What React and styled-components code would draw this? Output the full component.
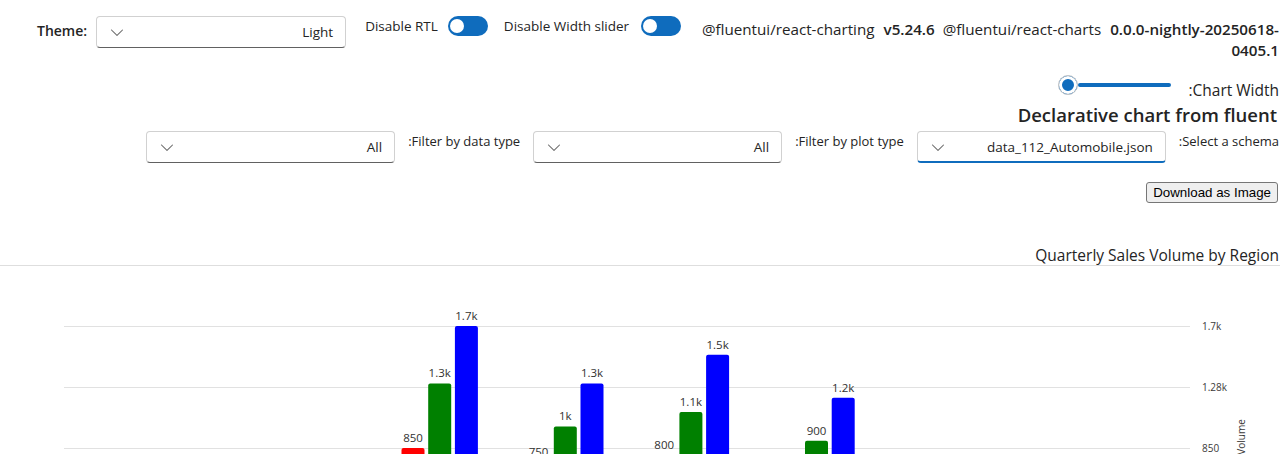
import React from "react";
import styled, { createGlobalStyle } from "styled-components";

const GlobalStyle = createGlobalStyle`
  body {
    margin: 0;
    background: #ffffff;
    color: #242424;
    font-family: "Segoe UI", "Open Sans", sans-serif;
    font-size: 13.5px;
  }
`;

const Page = styled.div`
  display: flex;
  flex-direction: column;
`;

const TopBar = styled.div`
  display: flex;
  align-items: flex-start;
  padding: 16px 1px 0 37px;
`;

const ThemeLabel = styled.label`
  font-weight: 600;
  font-size: 14px;
  line-height: 30px;
  margin-right: 9px;
`;

const DropBox = styled.div`
  box-sizing: border-box;
  width: ${(p) => p.$width || 250}px;
  height: 32px;
  flex: none;
  display: flex;
  align-items: center;
  justify-content: space-between;
  padding: 0 12px 0 10px;
  border: 1px solid #d1d1d1;
  border-bottom: ${(p) => (p.$focused ? "2px solid #0f6cbd" : "1px solid #616161")};
  border-radius: 4px;
  background: #ffffff;
  font-size: 13.5px;
  color: #242424;
`;

const Chevron = () => (
  <svg width="20" height="20" viewBox="0 0 20 20">
    <path
      fill="#616161"
      d="M15.85 7.65a.5.5 0 0 1 0 .7l-5.5 5.5a.5.5 0 0 1-.7 0l-5.5-5.5a.5.5 0 1 1 .7-.7L10 12.79l5.15-5.14a.5.5 0 0 1 .7 0Z"
    />
  </svg>
);

const Dropdown = ({ value, width, focused }) => (
  <DropBox $width={width} $focused={focused}>
    <Chevron />
    <span>{value}</span>
  </DropBox>
);

const SwitchGroup = styled.div`
  display: flex;
  align-items: center;
  margin-left: ${(p) => p.$gap || 19}px;
  height: 20px;
`;

const SwitchLabel = styled.span`
  font-size: 13.5px;
  line-height: 20px;
  margin-right: ${(p) => p.$gap || 10}px;
`;

const Track = styled.span`
  box-sizing: border-box;
  width: 40px;
  height: 20px;
  border-radius: 10px;
  background: #0f6cbd;
  display: flex;
  align-items: center;
  padding-left: 2px;
`;

const Knob = styled.span`
  width: 14px;
  height: 14px;
  border-radius: 50%;
  background: #ffffff;
`;

const Switch = () => (
  <Track>
    <Knob />
  </Track>
);

const Versions = styled.div`
  flex: 1;
  margin-left: 17px;
  padding-top: 3px;
  text-align: right;
  font-size: 15.2px;
  line-height: 21px;
  white-space: nowrap;
`;

const Pkg = styled.span`
  margin-left: ${(p) => (p.$first ? 0 : 8)}px;
`;

const Ver = styled.b`
  font-weight: 600;
  margin-left: 9px;
`;

const RightRow = styled.div`
  display: flex;
  justify-content: flex-end;
  align-items: flex-start;
  gap: ${(p) => p.$gap || 13}px;
  padding-right: 1px;
  margin-top: ${(p) => p.$top || 0}px;
`;

const FieldLabel = styled.span`
  font-size: ${(p) => p.$size || 13}px;
  line-height: 20px;
  margin-top: ${(p) => p.$top || 0}px;
`;

const SliderBox = styled.div`
  width: 113px;
  height: 20px;
  display: flex;
  align-items: center;
`;

const Thumb = styled.span`
  box-sizing: border-box;
  width: 20px;
  height: 20px;
  flex: none;
  border-radius: 50%;
  background: #0f6cbd;
  border: 1px solid #c7c7c7;
  box-shadow: inset 0 0 0 3px #ffffff;
`;

const Rail = styled.span`
  flex: 1;
  height: 4px;
  border-radius: 2px;
  background: #0f6cbd;
`;

const Slider = () => (
  <SliderBox>
    <Thumb />
    <Rail />
  </SliderBox>
);

const Heading = styled.h2`
  margin: 2px 3px 0 0;
  text-align: right;
  font-size: 18.5px;
  font-weight: 600;
  line-height: 26px;
`;

const DownloadButton = styled.button`
  font-family: "Liberation Sans", Arial, sans-serif;
  font-size: 13.33px;
  color: #000000;
  background: #efefef;
  border: 1px solid #767676;
  border-radius: 3px;
  padding: 2px 6px 2px;
  line-height: 15px;
  margin-right: 1px;
`;

const ChartTitle = styled.div`
  margin-top: 42px;
  padding-right: 1px;
  text-align: right;
  font-size: 15.5px;
  line-height: 20px;
  border-bottom: 1px solid #dedede;
`;

const ChartSvg = styled.svg`
  display: block;
  font-family: "Segoe UI", "Open Sans", sans-serif;
`;

const CHART_H = 188;
const groups = [
  [850, 1300, 1700],
  [750, 1000, 1300],
  [800, 1100, 1500],
  [600, 900, 1200],
];
const colors = ["#ff0000", "#008000", "#0000ff"];
const yOf = (v) => 60 + ((1700 - v) * 61) / 425;
const fmt = (v) => (v >= 1000 ? `${+(v / 1000).toFixed(1)}k` : `${v}`);

const Chart = () => (
  <ChartSvg width="1280" height={CHART_H}>
    {[60, 121, 182].map((y) => (
      <line key={y} x1="64" x2="1190" y1={y + 0.5} y2={y + 0.5} stroke="#e1e1e1" />
    ))}
    {[
      [60, "1.7k"],
      [121, "1.28k"],
      [182, "850"],
    ].map(([y, t]) => (
      <text key={t} x="1202" y={y + 3.5} fontSize="10" fill="#3b3a39">
        {t}
      </text>
    ))}
    <text
      transform="translate(1245 171) rotate(-90)"
      textAnchor="middle"
      fontSize="10"
      fill="#3b3a39"
    >
      Volume
    </text>
    {groups.map((vals, g) =>
      vals.map((v, i) => {
        const x = 401.5 + g * 125.6 + i * 26.7;
        const top = yOf(v);
        // bars whose label falls below the visible area are not drawn
        if (top - 16 > CHART_H) return null;
        return (
          <g key={`${g}-${i}`}>
            <rect x={x} y={top} width="23" height={CHART_H - top + 4} rx="2" fill={colors[i]} />
            <text
              x={x + 11.5}
              y={top - 6}
              textAnchor="middle"
              fontSize="11.5"
              fill="#323130"
            >
              {fmt(v)}
            </text>
          </g>
        );
      })
    )}
  </ChartSvg>
);

const App = () => (
  <Page>
    <GlobalStyle />
    <TopBar>
      <ThemeLabel>Theme:</ThemeLabel>
      <Dropdown value="Light" />
      <SwitchGroup>
        <SwitchLabel>Disable RTL</SwitchLabel>
        <Switch />
      </SwitchGroup>
      <SwitchGroup $gap={16}>
        <SwitchLabel $gap={12}>Disable Width slider</SwitchLabel>
        <Switch />
      </SwitchGroup>
      <Versions>
        <Pkg $first>@fluentui/react-charting</Pkg>
        <Ver>v5.24.6</Ver>
        <Pkg>@fluentui/react-charts</Pkg>
        <Ver>0.0.0-nightly-20250618-</Ver>
        <br />
        <Ver>0405.1</Ver>
      </Versions>
    </TopBar>
    <RightRow $gap={17} $top={14}>
      <Slider />
      <FieldLabel $top={5} $size={15.5}>:Chart Width</FieldLabel>
    </RightRow>
    <Heading>Declarative chart from fluent</Heading>
    <RightRow $top={3}>
      <Dropdown value="All" width={249} />
      <FieldLabel>:Filter by data type</FieldLabel>
      <Dropdown value="All" width={249} />
      <FieldLabel>:Filter by plot type</FieldLabel>
      <Dropdown value="data_112_Automobile.json" width={249} focused />
      <FieldLabel>:Select a schema</FieldLabel>
    </RightRow>
    <RightRow $top={19}>
      <DownloadButton>Download as Image</DownloadButton>
    </RightRow>
    <ChartTitle>Quarterly Sales Volume by Region</ChartTitle>
    <Chart />
  </Page>
);

export default App;
